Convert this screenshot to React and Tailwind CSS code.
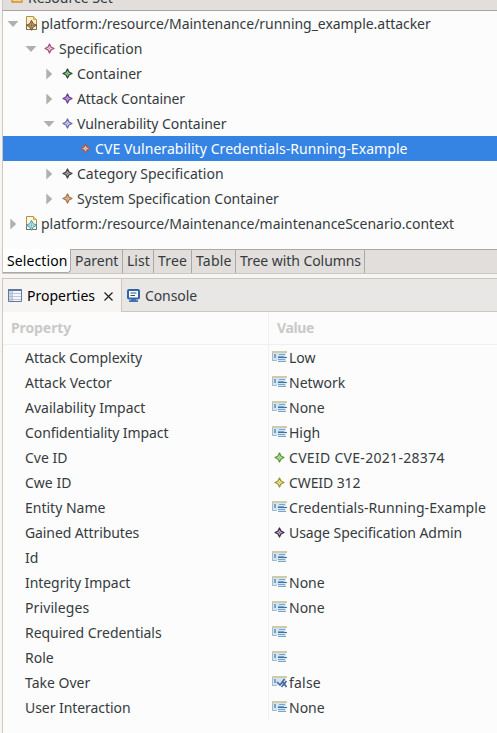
import React from "react";

function Diamond({ stroke, fill }) {
  return (
    <svg width="11" height="11" viewBox="0 0 11 11" className="shrink-0">
      <path
        d="M5.5 1 7 4 10 5.5 7 7 5.5 10 4 7 1 5.5 4 4Z"
        fill={fill}
        stroke={stroke}
        strokeWidth="1.25"
        strokeLinejoin="round"
      />
      <path d="M5 5H6V6H5Z" fill={stroke} opacity=".4" />
    </svg>
  );
}

function FileIcon({ stroke, fill, page }) {
  return (
    <svg width="12" height="15" viewBox="0 0 12 15" className="shrink-0">
      <path d="M.5 .5H7.5L10.5 3.5V13.5H.5Z" fill={page} stroke="#b98e3c" />
      <path d="M.5 8V13.5H10.5V8" fill="none" stroke="#70775f" />
      <path d="M7.5 .5V3.5H10.5" fill="#ecd38b" stroke="#c79a3f" strokeWidth=".8" />
      <path d="M5.5 4.3 7.2 7.6 10.5 9.3 7.2 11 5.5 14.3 3.8 11 .5 9.3 3.8 7.6Z" fill={fill} stroke={stroke} />
      <path d="M5.5 6.4V12.2M2.7 9.3H8.3" stroke={stroke} strokeWidth=".7" opacity=".7" />
    </svg>
  );
}

function Arrow({ open }) {
  return (
    <svg width="12" height="12" viewBox="0 0 12 12" className="shrink-0">
      <path d={open ? "M.5 3H11.5L6 9Z" : "M3.3 .5V11.5L9.3 6Z"} fill="#b0b0af" />
    </svg>
  );
}

function FieldIcon({ check }) {
  return (
    <svg width="15" height="12" viewBox="0 0 15 12" className="shrink-0">
      <path d="M0 0H15V2H0Z" fill="#cdcbae" />
      <path d="M0 2H14V9H0Z" fill="#d5e4f1" />
      <path d="M0 2H1V10H0ZM0 9H5V10H0Z" fill="#a5bbcb" />
      <path d="M2 3H4V7H2Z" fill="#7ba3c6" />
      {check ? (
        <path d="M5 6 8 9 12.5 3M10 5 14.5 11M14.5 5 9.5 11" fill="none" stroke="#46689f" strokeWidth="1.6" />
      ) : (
        <g>
          <path d="M6 8H14V11H6Z" fill="#d5e4f1" />
          <path d="M7 3H13V4H7ZM6 8H13V9H6ZM6 10H14V11H6Z" fill="#7aa5ca" />
          <path d="M6 5H12V6H6Z" fill="#7aa5ca" />
          <path d="M6 6H15V7H6Z" fill="#3d74a6" />
        </g>
      )}
    </svg>
  );
}

const tree = [
  { pad: "pl-1", open: true, file: ["#76502e", "#c99b66", "#fbf0cf"], text: "platform:/resource/Maintenance/running_example.attacker", track: "tracking-[-0.04px]" },
  { pad: "pl-[22px]", open: true, icon: ["#a94d7c", "#e0ccd8"], text: "Specification" },
  { pad: "pl-10", open: false, icon: ["#34443a", "#77d581"], text: "Container" },
  { pad: "pl-10", open: false, icon: ["#67359a", "#b5a5bd"], text: "Attack Container", track: "tracking-[-0.1px]" },
  { pad: "pl-10", open: true, icon: ["#6767b5", "#c9cce6"], text: "Vulnerability Container", track: "tracking-[-0.05px]" },
  { pad: "pl-[58px]", icon: ["#b05849", "#d6cbbd"], text: "CVE Vulnerability Credentials-Running-Example", track: "tracking-[0.07px]", selected: true },
  { pad: "pl-10", open: false, icon: ["#404040", "#a0a0a0"], text: "Category Specification" },
  { pad: "pl-10", open: false, icon: ["#a87343", "#d3bba3"], text: "System Specification Container", track: "tracking-[-0.04px]" },
  { pad: "pl-1", open: false, file: ["#46979f", "#c8f0f2", "#f8f7e8"], text: "platform:/resource/Maintenance/maintenanceScenario.context", track: "tracking-[-0.03px]" },
];

const properties = [
  { name: "Attack Complexity", value: "Low", nameTrack: "tracking-[-0.06px]" },
  { name: "Attack Vector", value: "Network" },
  { name: "Availability Impact", value: "None" },
  { name: "Confidentiality Impact", value: "High", nameTrack: "tracking-[-0.08px]" },
  { name: "Cve ID", value: "CVEID CVE-2021-28374", kind: ["#5e963f", "#b4e296"], valueTrack: "tracking-[0.3px]" },
  { name: "Cwe ID", value: "CWEID 312", kind: ["#98933a", "#ebe78c"], valueTrack: "tracking-[-0.1px]" },
  { name: "Entity Name", value: "Credentials-Running-Example", valueTrack: "tracking-[0.07px]" },
  { name: "Gained Attributes", value: "Usage Specification Admin", kind: ["#35313d", "#bd9dd3"], nameTrack: "tracking-[-0.1px]", valueTrack: "tracking-[-0.07px]" },
  { name: "Id", value: "" },
  { name: "Integrity Impact", value: "None", nameTrack: "tracking-[-0.06px]" },
  { name: "Privileges", value: "None", nameTrack: "tracking-[0.1px]" },
  { name: "Required Credentials", value: "", nameTrack: "tracking-[-0.04px]" },
  { name: "Role", value: "" },
  { name: "Take Over", value: "false", kind: "check", valueTrack: "tracking-[0.2px]" },
  { name: "User Interaction", value: "None", nameTrack: "tracking-[-0.06px]" },
];

const tabs = [
  ["Parent", "w-[52px]"],
  ["List", "w-[31px]"],
  ["Tree", "w-[38px] tracking-[0.2px]"],
  ["Table", "w-11 tracking-[0.2px]"],
  ["Tree with Columns", "w-[129px] tracking-[-0.06px]"],
];

function TreeRow({ row }) {
  return (
    <div className={`flex h-[25px] ${row.pad} ${row.selected ? "bg-[#3584e4] text-white" : ""}`}>
      <span className="flex w-3 items-center">{row.open !== undefined && <Arrow open={row.open} />}</span>
      <span className={`flex items-start ${row.file ? "mr-[3px] ml-[7px] w-3 pt-[5px]" : "mr-1 ml-[7px] w-[11px] pt-[7px]"}`}>
        {row.file ? (
          <FileIcon stroke={row.file[0]} fill={row.file[1]} page={row.file[2]} />
        ) : (
          <Diamond stroke={row.icon[0]} fill={row.icon[1]} />
        )}
      </span>
      <span className={row.track}>{row.text}</span>
    </div>
  );
}

function ValueIcon({ kind }) {
  if (Array.isArray(kind)) {
    return (
      <span className="flex w-[17px] items-start pt-[7px] pl-[2px]">
        <Diamond stroke={kind[0]} fill={kind[1]} />
      </span>
    );
  }
  return (
    <span className="flex w-[17px] items-start pt-[6px]">
      <FieldIcon check={kind === "check"} />
    </span>
  );
}

export default function App() {
  return (
    <div className="flex h-[733px] w-[497px] overflow-hidden bg-[#f6f5f4] pl-[2px] font-['Noto_Sans',sans-serif] text-[14px] leading-[25px] whitespace-nowrap text-[#363b3e]">
      <div className="flex min-w-0 flex-1 flex-col">
        <div className="flex h-[11px] items-end overflow-hidden border-b border-l border-[#aaa5a2] border-l-[#cdc7c2] bg-[#e1dedb] pl-2">
          <svg width="12" height="12" viewBox="0 0 12 12" className="mb-[7px] shrink-0">
            <path d="M1 1H5L6 3H11V11H1Z" fill="#f9d583" stroke="#cc903c" strokeWidth="1.3" />
          </svg>
          <span className="ml-[5px] h-[25px] leading-[25px]">Resource Set</span>
        </div>
        <div className="h-[238px] border-l border-[#cdc7c2] bg-[#fcfcfc]">
          {tree.map((row) => <TreeRow key={row.text} row={row} />)}
        </div>
        <div className="flex h-[25px] border-b border-l border-[#cdc7c2] bg-[#e1dedb]">
          <div className="h-6 w-[68px] rounded-br border-r border-b border-[#aaa9a8] bg-white pl-1 leading-[23px] tracking-[0.1px] text-black">Selection</div>
          <div className="flex flex-1 border-t border-[#aaa9a8] leading-[21px]">
            {tabs.map(([name, width]) => (
              <div key={name} className={`${width} border-r border-[#aaa9a8] pl-1`}>{name}</div>
            ))}
          </div>
        </div>
        <div className="h-1" />
        <div className="flex h-[34px] border-t border-l border-[#cdc7c2] bg-[#e9e7e6]">
          <div className="flex w-[118px] items-center bg-[#f6f5f4] pl-[5px] text-black">
            <svg width="14" height="13" viewBox="0 0 14 13" className="shrink-0">
              <path d="M.5 .5H13.5V12.5H.5Z" fill="#f3f6fa" stroke="#66779c" />
              <path d="M0 0H14V2H0Z" fill="#63769f" />
              <path d="M1 2H4V12H1Z" fill="#cbd6e7" />
              <path d="M4.5 2V12M1 4.5H13M1 7.5H13M1 10.5H13" stroke="#a6b0c3" strokeWidth=".7" />
            </svg>
            <span className="ml-[5px] w-[70px]">Properties</span>
            <svg width="9" height="9" viewBox="0 0 9 9" className="mt-px ml-[7px] shrink-0">
              <path d="M.5 .5 8.5 8.5M8.5 .5 .5 8.5" stroke="#202020" strokeWidth="1.2" />
            </svg>
          </div>
          <div className="flex flex-1 items-center border-b border-l border-[#cdc7c2] pl-[5px]">
            <svg width="13" height="13" viewBox="0 0 13 13" className="shrink-0">
              <rect x="1" y="1" width="11" height="8.5" rx="1" fill="#fff" stroke="#3263a5" strokeWidth="2" />
              <path d="M3.5 4H9.5M3.5 6.5H8" stroke="#334f7e" />
              <path d="M4 10H9V11.3H11V13H2V11.3H4Z" fill="#3d73b5" />
            </svg>
            <span className="ml-[5px] tracking-[-0.1px]">Console</span>
          </div>
        </div>
        <div className="flex flex-1 flex-col border-l border-[#cdc7c2] bg-[#fcfcfc]">
          <div className="flex h-[33px] border-b border-[#f0f0ef] leading-[32px] font-bold text-[#c9c9c8]">
            <div className="h-full w-[266px] border-r border-[#f0f0ef] pl-2 tracking-[-0.1px]">Property</div>
            <div className="pl-2 tracking-[-0.4px]">Value</div>
          </div>
          {properties.map((row) => (
            <div key={row.name} className="flex h-[25px]">
              <div className={`w-[266px] border-r border-[#f0f0ef] pl-[22px] ${row.nameTrack ?? ""}`}>{row.name}</div>
              <div className="flex pl-[3px]">
                <ValueIcon kind={row.kind} />
                <span className={row.valueTrack}>{row.value}</span>
              </div>
            </div>
          ))}
        </div>
      </div>
    </div>
  );
}
